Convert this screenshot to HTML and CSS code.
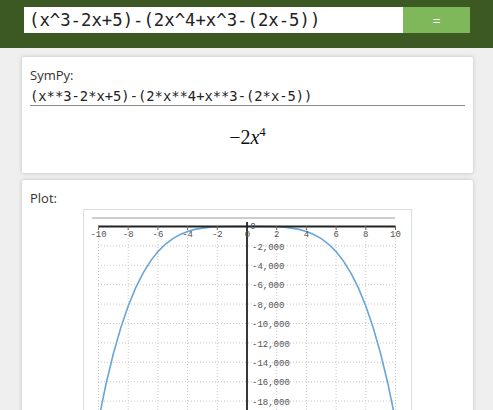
FILE: index.html
```html
<!DOCTYPE html>
<html lang="en">
<head>
    <meta charset="UTF-8">
    <meta name="viewport" content="width=device-width, initial-scale=1.0">
    <title>SymPy Calculator</title>
    <link rel="stylesheet" href="styles.css">
</head>
<body>
    <div class="header">
        <div class="search">
            <input id="exprInput" class="expr-input" type="text" value="(x^3-2x+5)-(2x^4+x^3-(2x-5))">
            <button class="eval-btn">=</button>
        </div>
    </div>

    <div class="card">
        <div class="card-label">SymPy:</div>
        <div class="sympy-expr">(x**3-2*x+5)-(2*x**4+x**3-(2*x-5))</div>
        <div class="result">
            <span class="math">&minus;2<i>x</i><sup>4</sup></span>
        </div>
    </div>

    <div class="card">
        <div class="card-label">Plot:</div>
        <div class="plot-frame">
            <svg class="plot" width="327" height="200" viewBox="1 1 327 200">
                <line x1="9" y1="9" x2="312" y2="9" stroke="#9a9a9a" stroke-width="1"/>
                <!-- grid -->
                <g stroke="#c8c8c8" stroke-width="1" stroke-dasharray="1,2">
                    <line x1="15.5" y1="17" x2="15.5" y2="201"/>
                    <line x1="45.2" y1="17" x2="45.2" y2="201"/>
                    <line x1="74.9" y1="17" x2="74.9" y2="201"/>
                    <line x1="104.6" y1="17" x2="104.6" y2="201"/>
                    <line x1="134.3" y1="17" x2="134.3" y2="201"/>
                    <line x1="193.7" y1="17" x2="193.7" y2="201"/>
                    <line x1="223.4" y1="17" x2="223.4" y2="201"/>
                    <line x1="253.1" y1="17" x2="253.1" y2="201"/>
                    <line x1="282.8" y1="17" x2="282.8" y2="201"/>
                    <line x1="312.5" y1="17" x2="312.5" y2="201"/>
                    <line x1="15" y1="36.9" x2="312.5" y2="36.9"/>
                    <line x1="15" y1="56.3" x2="312.5" y2="56.3"/>
                    <line x1="15" y1="75.7" x2="312.5" y2="75.7"/>
                    <line x1="15" y1="95.1" x2="312.5" y2="95.1"/>
                    <line x1="15" y1="114.5" x2="312.5" y2="114.5"/>
                    <line x1="15" y1="133.9" x2="312.5" y2="133.9"/>
                    <line x1="15" y1="153.3" x2="312.5" y2="153.3"/>
                    <line x1="15" y1="172.7" x2="312.5" y2="172.7"/>
                    <line x1="15" y1="192.1" x2="312.5" y2="192.1"/>
                </g>
                <!-- curve -->
                <polyline fill="none" stroke="#6aa5d8" stroke-width="1.6"
                    points="15.5,211.5 22.9,175.5 30.35,144.8 37.8,118.8 45.2,97 52.6,78.9 60.05,64.1 67.5,52.1 74.9,42.6 82.3,35.3 89.75,29.6 97.2,25.5 104.6,22.5 112,20.4 119.45,19.1 126.9,18.3 134.3,17.8 149.15,17.5 164,17.5 178.85,17.5 193.7,17.8 201.1,18.3 208.55,19.1 216,20.4 223.4,22.5 230.8,25.5 238.25,29.6 245.7,35.3 253.1,42.6 260.5,52.1 267.95,64.1 275.4,78.9 282.8,97 290.2,118.8 297.65,144.8 305.1,175.5 312.5,211.5"/>
                <!-- axes -->
                <line x1="15" y1="17.5" x2="312.5" y2="17.5" stroke="#222" stroke-width="2"/>
                <line x1="164" y1="13" x2="164" y2="201" stroke="#222" stroke-width="1.8"/>
                <g stroke="#666" stroke-width="1">
                    <line x1="15.5" y1="17" x2="15.5" y2="21"/>
                    <line x1="45.2" y1="17" x2="45.2" y2="21"/>
                    <line x1="74.9" y1="17" x2="74.9" y2="21"/>
                    <line x1="104.6" y1="17" x2="104.6" y2="21"/>
                    <line x1="134.3" y1="17" x2="134.3" y2="21"/>
                    <line x1="193.7" y1="17" x2="193.7" y2="21"/>
                    <line x1="223.4" y1="17" x2="223.4" y2="21"/>
                    <line x1="253.1" y1="17" x2="253.1" y2="21"/>
                    <line x1="282.8" y1="17" x2="282.8" y2="21"/>
                    <line x1="312.5" y1="17" x2="312.5" y2="21"/>
                </g>
                <g class="tick-x" text-anchor="middle">
                    <text x="15.5" y="28">-10</text>
                    <text x="45.2" y="28">-8</text>
                    <text x="74.9" y="28">-6</text>
                    <text x="104.6" y="28">-4</text>
                    <text x="134.3" y="28">-2</text>
                    <text x="164.5" y="28">0</text>
                    <text x="193.7" y="28">2</text>
                    <text x="223.4" y="28">4</text>
                    <text x="253.1" y="28">6</text>
                    <text x="282.8" y="28">8</text>
                    <text x="312.5" y="28">10</text>
                    <text x="170" y="20">0</text>
                </g>
                <g class="tick-y">
                    <text x="169" y="40.5">-2,000</text>
                    <text x="169" y="59.9">-4,000</text>
                    <text x="169" y="79.3">-6,000</text>
                    <text x="169" y="98.7">-8,000</text>
                    <text x="169" y="118.1">-10,000</text>
                    <text x="169" y="137.5">-12,000</text>
                    <text x="169" y="156.9">-14,000</text>
                    <text x="169" y="176.3">-16,000</text>
                    <text x="169" y="195.7">-18,000</text>
                </g>
            </svg>
        </div>
    </div>
</body>
</html>
```

FILE: styles.css
```css
body {
    font-family: "Open Sans", "Noto Sans", sans-serif;
    background-color: #efefef;
    margin: 0;
    padding: 0;
    color: #333;
}
.header {
    background-color: #3c5924;
    padding: 7px 23px 15px 24px;
}
.search {
    display: flex;
    height: 26px;
}
.expr-input {
    flex: 1;
    border: none;
    margin: 0;
    padding: 0 5px;
    height: 26px;
    font-family: "DejaVu Sans Mono", monospace;
    font-size: 17.3px;
    color: #222;
    background-color: #fff;
    outline: none;
}
.eval-btn {
    width: 67px;
    height: 26px;
    border: none;
    margin: 0;
    background-color: #7fb85b;
    color: #fff;
    font-size: 14px;
    font-family: "Open Sans", sans-serif;
}
.card {
    background-color: #fff;
    margin: 9px 20px 0 22px;
    padding: 9px 8px 5px 8px;
    border-radius: 2px;
    box-shadow: 0 0 4px rgba(0,0,0,0.2);
}
.card + .card {
    margin-top: 7px;
}
.card-label {
    font-size: 13px;
    line-height: 18px;
    color: #333;
}
.sympy-expr {
    margin-top: 4px;
    font-family: "DejaVu Sans Mono", monospace;
    font-size: 13.8px;
    line-height: 17px;
    color: #222;
    border-bottom: 1px solid #888;
}
.result {
    height: 62px;
    display: flex;
    justify-content: center;
    align-items: center;
}
.math {
    font-family: "Liberation Serif", "DejaVu Serif", serif;
    font-size: 20px;
    color: #111;
}
.math sup {
    font-size: 13px;
    vertical-align: 8px;
    line-height: 0;
}
.plot-frame {
    width: 327px;
    margin: 2px auto 0;
    border: 1px solid #dcdcdc;
    background-color: #fff;
}
.plot {
    display: block;
}
.tick-x text,
.tick-y text {
    font-family: "Liberation Mono", monospace;
    font-size: 9px;
    fill: #555;
}
```
